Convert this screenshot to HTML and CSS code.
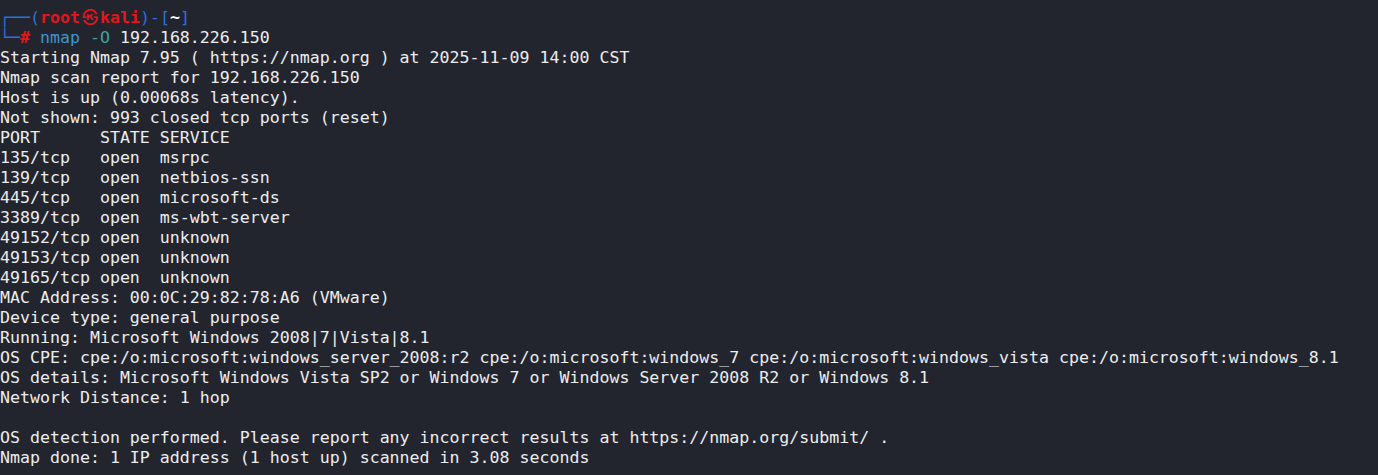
FILE: index.html
```html
<!DOCTYPE html>
<html>
<head>
<meta charset="utf-8">
<link rel="stylesheet" href="styles.css">
</head>
<body>
<pre class="term"><span class="frame">┌──(</span><span class="user">root<span class="at">㉿</span>kali</span><span class="frame">)-[</span><span class="cwd">~</span><span class="frame">]</span>
<span class="frame">└─</span><span class="user">#</span> <span class="cmd">nmap</span> <span class="opt">-O</span> 192.168.226.150
Starting Nmap 7.95 ( https://nmap.org ) at 2025-11-09 14:00 CST
Nmap scan report for 192.168.226.150
Host is up (0.00068s latency).
Not shown: 993 closed tcp ports (reset)
PORT      STATE SERVICE
135/tcp   open  msrpc
139/tcp   open  netbios-ssn
445/tcp   open  microsoft-ds
3389/tcp  open  ms-wbt-server
49152/tcp open  unknown
49153/tcp open  unknown
49165/tcp open  unknown
MAC Address: 00:0C:29:82:78:A6 (VMware)
Device type: general purpose
Running: Microsoft Windows 2008|7|Vista|8.1
OS CPE: cpe:/o:microsoft:windows_server_2008:r2 cpe:/o:microsoft:windows_7 cpe:/o:microsoft:windows_vista cpe:/o:microsoft:windows_8.1
OS details: Microsoft Windows Vista SP2 or Windows 7 or Windows Server 2008 R2 or Windows 8.1
Network Distance: 1 hop

OS detection performed. Please report any incorrect results at https://nmap.org/submit/ .
Nmap done: 1 IP address (1 host up) scanned in 3.08 seconds</pre>
</body>
</html>
```
FILE: styles.css
```css
html, body {
  margin: 0;
  padding: 0;
  background: #23252e;
  height: 100%;
}
.term {
  margin: 0;
  padding: 8px 0 0 0;
  font-family: "DejaVu Sans Mono", "Noto Sans CJK JP", monospace;
  font-size: 16.6px;
  line-height: 20px;
  color: #ecedef;
  white-space: pre;
}
.frame {
  color: #2f6fd6;
}
.user {
  color: #e3161b;
  font-weight: bold;
}
.at {
  display: inline-block;
  width: 20px;
  line-height: 0;
  text-align: center;
  font-family: "Noto Sans CJK JP", "DejaVu Sans", sans-serif;
  font-weight: bold;
  font-size: 16px;
}
.cwd {
  color: #ffffff;
  font-weight: bold;
}
.cmd {
  color: #3c95d2;
}
.opt {
  color: #3aa3a3;
}
```
